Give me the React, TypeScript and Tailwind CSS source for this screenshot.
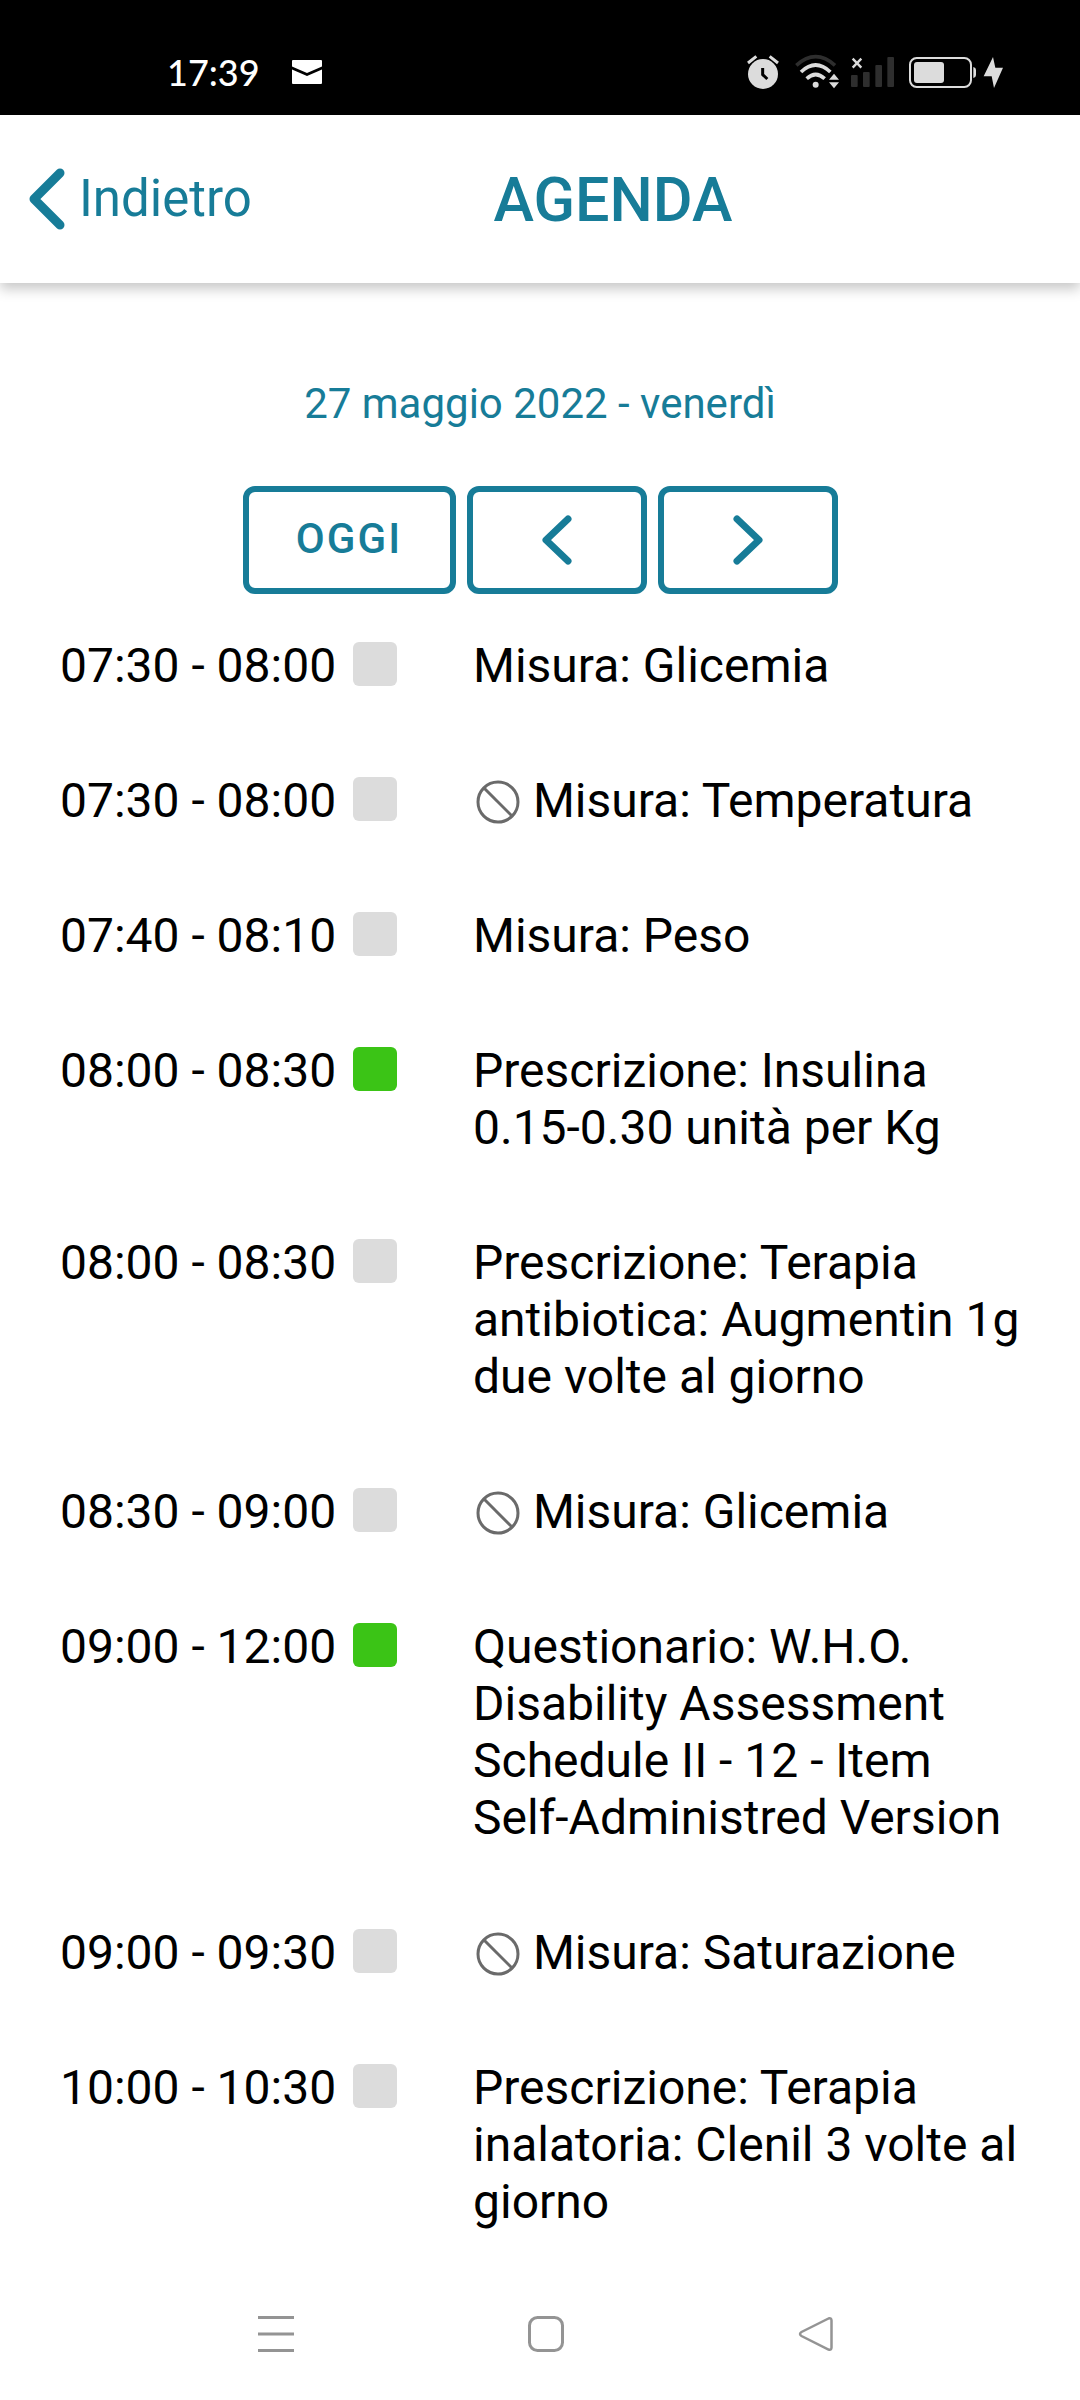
interface AgendaItem {
  time: string;
  title: string;
  done?: boolean;
  blocked?: boolean;
}

const items: AgendaItem[] = [
  { time: "07:30 - 08:00", title: "Misura: Glicemia" },
  { time: "07:30 - 08:00", title: "Misura: Temperatura", blocked: true },
  { time: "07:40 - 08:10", title: "Misura: Peso" },
  {
    time: "08:00 - 08:30",
    title: "Prescrizione: Insulina 0.15-0.30 unità per Kg",
    done: true,
  },
  {
    time: "08:00 - 08:30",
    title: "Prescrizione: Terapia antibiotica: Augmentin 1g due volte al giorno",
  },
  { time: "08:30 - 09:00", title: "Misura: Glicemia", blocked: true },
  {
    time: "09:00 - 12:00",
    title:
      "Questionario: W.H.O. Disability Assessment Schedule II - 12 - Item Self-Administred Version",
    done: true,
  },
  { time: "09:00 - 09:30", title: "Misura: Saturazione", blocked: true },
  {
    time: "10:00 - 10:30",
    title: "Prescrizione: Terapia inalatoria: Clenil 3 volte al giorno",
  },
];

function StatusBar() {
  return (
    <div className="flex h-[115px] items-end justify-between bg-black pr-[76px] pb-[25px] pl-[167px] text-white">
      <div className="flex h-9 items-center gap-8">
        <span className="font-['Lato',sans-serif] text-[36px] leading-9 font-medium">
          17:39
        </span>
        <svg width="30" height="24" viewBox="0 0 30 24" fill="currentColor">
          <path d="M1 0h28a1 1 0 0 1 1 1v5.500L15 13 0 6.500V1a1 1 0 0 1 1-1Z" />
          <path d="M0 9.500l15 6.500 15-6.500V23a1 1 0 0 1-1 1H1a1 1 0 0 1-1-1Z" />
        </svg>
      </div>
      <div className="flex gap-[10px] text-[#dcdcdc]">
        <svg width="38" height="36" viewBox="78 72 114 108" fill="none">
          <circle cx="129" cy="132" r="45" fill="currentColor" />
          <path d="M84 99l25-20M174 99l-25-20" stroke="currentColor" strokeWidth="9" />
          <path d="M128 114v20l14 13" stroke="#000" strokeWidth="9" />
        </svg>
        <svg width="46" height="36" viewBox="222 72 138 108" fill="none">
          <path d="M229 106q58-52 116 0" stroke="#2e2e2e" strokeWidth="11" />
          <path
            d="M243 126q44-42 88 0M260 146q27-25 54 0"
            stroke="currentColor"
            strokeWidth="11"
          />
          <circle cx="287" cy="164" r="9" fill="currentColor" />
          <path d="M342 131l15 18h-30ZM342 175l15-18h-30Z" fill="currentColor" />
        </svg>
        <svg width="48" height="36" viewBox="390 72 144 108" fill="none">
          <g fill="#2e2e2e">
            <rect x="393" y="135" width="20" height="36" rx="3" />
            <rect x="429" y="126" width="20" height="45" rx="3" />
            <rect x="466" y="105" width="20" height="66" rx="3" />
            <rect x="502" y="81" width="20" height="90" rx="3" />
          </g>
          <path d="M398 86l26 27M424 86l-26 27" stroke="currentColor" strokeWidth="7" />
        </svg>
        <svg width="96" height="36" viewBox="564 72 288 108" fill="none">
          <rect
            x="570"
            y="84"
            width="183"
            height="87"
            rx="20"
            stroke="currentColor"
            strokeWidth="6"
          />
          <rect x="582" y="96" width="90" height="63" rx="9" fill="currentColor" />
          <path d="M760 111q8 2 8 9v15q0 7-8 9Z" fill="currentColor" />
          <path d="M819 81l-28 58h24l7 35 27-61h-23Z" fill="currentColor" />
        </svg>
      </div>
    </div>
  );
}

function Header() {
  return (
    <header className="flex h-[168px] items-center bg-white pr-[106px] pl-[29px] text-[#177c98] shadow-[0_6px_12px_rgba(0,0,0,0.22)]">
      <button className="flex items-center gap-[14px] text-[51px] leading-[60px]">
        <svg width="36" height="62" viewBox="0 0 36 62" fill="none">
          <path
            d="M31 5L5 31l26 26"
            stroke="currentColor"
            strokeWidth="9"
            strokeLinecap="round"
            strokeLinejoin="round"
          />
        </svg>
        Indietro
      </button>
      <h1 className="flex-1 pt-[2px] text-center text-[61px] leading-[72px] font-medium">
        AGENDA
      </h1>
    </header>
  );
}

function Arrow({ d }: { d: string }) {
  return (
    <svg width="30" height="50" viewBox="0 0 30 50" fill="none">
      <path
        d={d}
        stroke="currentColor"
        strokeWidth="7"
        strokeLinecap="round"
        strokeLinejoin="round"
      />
    </svg>
  );
}

function BlockedIcon() {
  return (
    <svg
      className="inline-block align-[-9px]"
      width="48"
      height="48"
      viewBox="0 0 48 48"
      fill="none"
      stroke="#6a6a6a"
      strokeWidth="3"
    >
      <circle cx="25" cy="24" r="20" />
      <path d="M11 10l28 28" />
    </svg>
  );
}

function AgendaRow({ item }: { item: AgendaItem }) {
  return (
    <li className="grid grid-cols-[413px_1fr]">
      <div className="flex items-start gap-[17px]">
        <time>{item.time}</time>
        <span
          className={`mt-[5px] size-11 rounded-md ${item.done ? "bg-[#3bc416]" : "bg-[#dcdcdc]"}`}
        />
      </div>
      <p>
        {item.blocked && (
          <>
            <BlockedIcon />{" "}
          </>
        )}
        {item.title}
      </p>
    </li>
  );
}

function NavBar() {
  return (
    <nav className="mt-auto flex justify-between pr-[246px] pb-12 pl-[258px] text-[#949494]">
      <button aria-label="Recenti">
        <svg width="36" height="36" viewBox="0 0 36 36" stroke="currentColor" strokeWidth="3">
          <path d="M0 1.500h36M0 18h36M0 34.500h36" />
        </svg>
      </button>
      <button aria-label="Home">
        <svg width="36" height="36" viewBox="0 0 36 36" fill="none">
          <rect
            x="1.500"
            y="1.500"
            width="33"
            height="33"
            rx="8"
            stroke="currentColor"
            strokeWidth="3"
          />
        </svg>
      </button>
      <button aria-label="Indietro">
        <svg width="36" height="36" viewBox="0 0 36 36" fill="none">
          <path
            d="M30.500 2.500L3.500 16q-3 2 0 4l27 13.500q3 1 3-2v-27q0-3-3-2Z"
            stroke="currentColor"
            strokeWidth="2.500"
          />
        </svg>
      </button>
    </nav>
  );
}

export default function App() {
  return (
    <div className="flex min-h-screen flex-col bg-white font-['Roboto',sans-serif] text-black">
      <StatusBar />
      <Header />
      <main>
        <h2 className="mt-24 text-center text-[42px] leading-[50px] text-[#177c98]">
          27 maggio 2022 - venerdì
        </h2>
        <div className="mt-[57px] flex justify-center gap-[11px] text-[#177c98]">
          <button className="h-[108px] w-[213px] rounded-xl border-6 border-current pb-[3px] text-[42px] font-medium tracking-wider">
            OGGI
          </button>
          <button
            aria-label="Giorno precedente"
            className="flex h-[108px] w-[180px] items-center justify-center rounded-xl border-6 border-current"
          >
            <Arrow d="M26 4L4 25l22 21" />
          </button>
          <button
            aria-label="Giorno successivo"
            className="flex h-[108px] w-[180px] items-center justify-center rounded-xl border-6 border-current"
          >
            <Arrow d="M4 4l22 21L4 46" />
          </button>
        </div>
        <ul className="mt-[43px] flex flex-col gap-[78px] pr-12 pl-[60px] text-[48px] leading-[57px]">
          {items.map((item, i) => (
            <AgendaRow key={i} item={item} />
          ))}
        </ul>
      </main>
      <NavBar />
    </div>
  );
}
